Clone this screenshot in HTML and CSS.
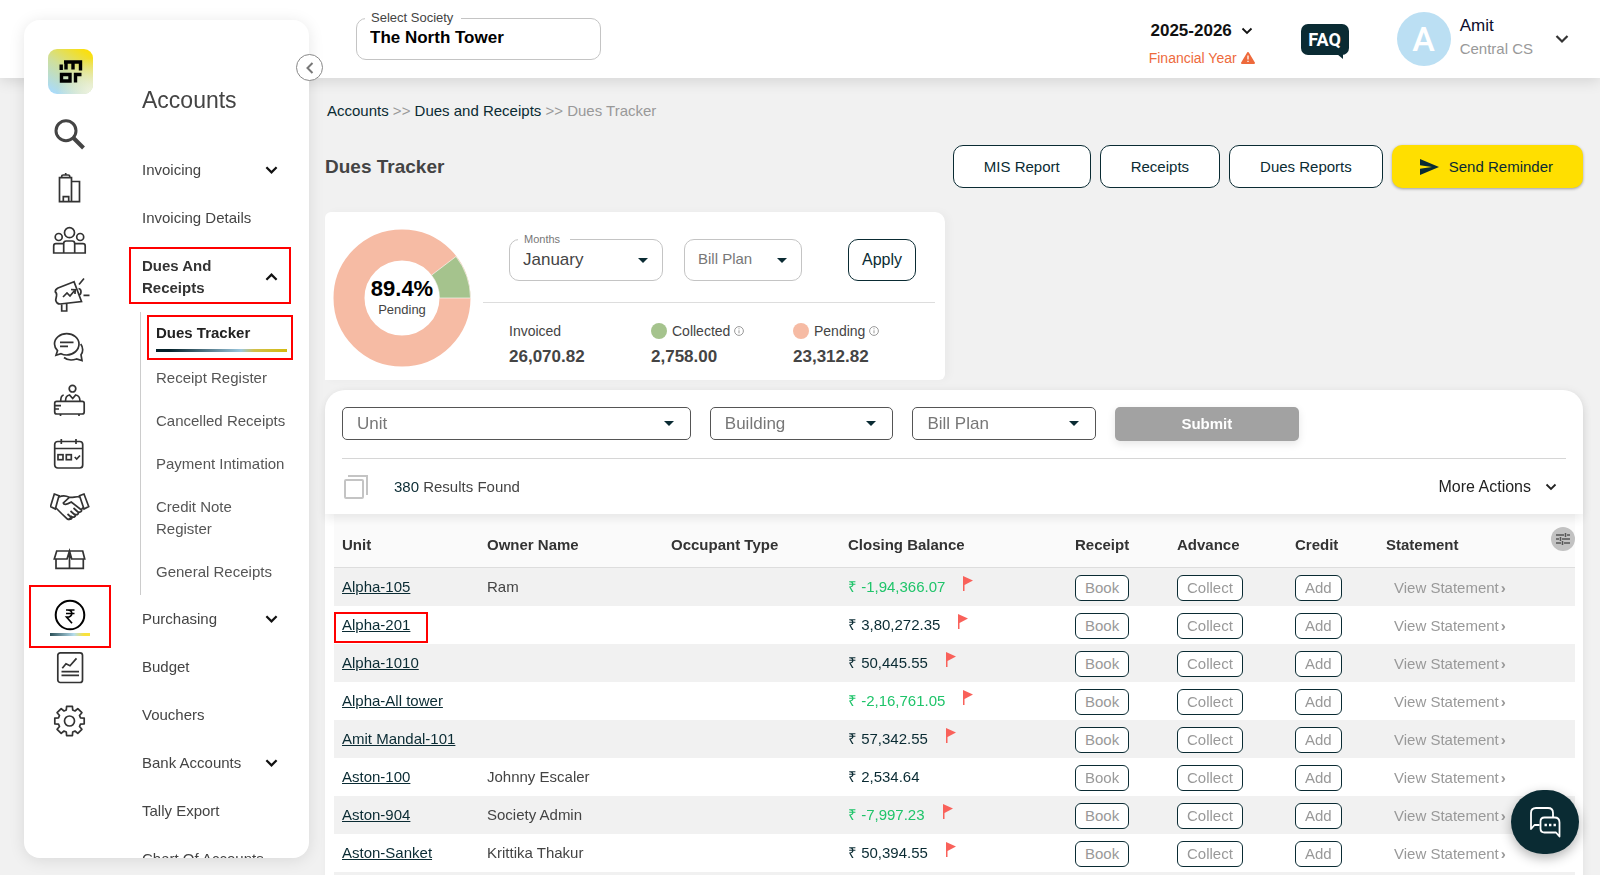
FILE: index.html
```html
<!DOCTYPE html>
<html lang="en">
<head>
	<title>Dues Tracker</title>
	<meta charset="UTF-8">
	<link rel="stylesheet" href="styles.css">
</head>
<body>
	<header class="topbar">
		<fieldset class="field society">
			<legend><label for="society">Select Society</label></legend>
			<select id="society"><option>The North Tower</option></select>
		</fieldset>
		<div class="year">
			<button type="button" class="year-btn">2025-2026
				<svg width="12" height="8" viewBox="0 0 12 8"><path d="M1.500 1.500l4.500 4.500 4.500-4.500" fill="none" stroke="#111" stroke-width="1.800"/></svg>
			</button>
			<span class="year-note">Financial Year
				<svg width="14" height="12" viewBox="0 0 14 12"><path d="M7 1L13 11H1z" fill="#ee6a3c" stroke="#ee6a3c" stroke-width="2" stroke-linejoin="round"/><path d="M7 3.500v4M7 8.700v1.300" stroke="#fff" stroke-width="1.300"/></svg>
			</span>
		</div>
		<a href="#" class="faq">FAQ</a>
		<div class="user">
			<span class="avatar">A</span>
			<span class="who"><span class="name">Amit</span><span class="role">Central CS</span></span>
			<button type="button" class="plain" aria-label="Account menu">
				<svg width="14" height="10" viewBox="0 0 14 10"><path d="M1.500 2l5.500 5.500L12.500 2" fill="none" stroke="#333" stroke-width="2.200"/></svg>
			</button>
		</div>
	</header>

	<aside class="sidebar">
		<div class="side-scroll">
			<div class="rail">
				<svg class="logo" width="45" height="45" viewBox="0 0 45 45">
					<defs>
						<linearGradient id="logo-fill" x1="0.150" y1="1" x2="0.800" y2="0">
							<stop offset="0" stop-color="#a9dbfb"/>
							<stop offset="0.500" stop-color="#cfdf9c"/>
							<stop offset="1" stop-color="#fbdf0c"/>
						</linearGradient>
						<radialGradient id="logo-glow" cx="1" cy="1" r="0.800">
							<stop offset="0" stop-color="#f1f4e4"/>
							<stop offset="1" stop-color="#f1f4e4" stop-opacity="0"/>
						</radialGradient>
					</defs>
					<rect width="45" height="45" rx="9" fill="url(#logo-fill)"/>
					<rect width="45" height="45" rx="9" fill="url(#logo-glow)"/>
					<path d="M13.200 15.500v5.500M16 13h16.500v8.500M25 13v7.500M18 13v7.500M13.500 25.500h8.500v6.500h-8.500zM27.500 33.500v-8h6" fill="none" stroke="#000" stroke-width="3.400"/>
				</svg>
				<ul>
					<li class="search"><a href="#" aria-label="Search"><svg viewBox="0 0 40 40"><circle cx="16" cy="16.700" r="10" stroke-width="3"/><path d="M23.500 24l10 10" stroke-width="4"/></svg></a></li>
					<li><a href="#" aria-label="Buildings"><svg viewBox="0 0 40 40"><path d="M9.500 9.700h12v24h-12zM21.500 13.500h8v20.200h-8M13.300 33.700v-5h5.400v5M11.700 9.500V8q0-1 1.500-1h5q1.500 0 1.500 1v1.500M15.700 7V5"/></svg></a></li>
					<li><a href="#" aria-label="Members"><svg viewBox="0 0 40 40"><circle cx="19.500" cy="11.700" r="5"/><circle cx="8.700" cy="16" r="3.500"/><circle cx="30.200" cy="16" r="3.500"/><path d="M13.700 32V22.500q0-2.500 2.500-2.500h6q2.500 0 2.500 2.500V32zM13.700 32h-10v-7q0-2.300 2.300-2.300h7.700M24.700 32h10.500v-7q0-2.300-2.300-2.300h-8.200"/></svg></a></li>
					<li><a href="#" aria-label="Notices"><svg viewBox="0 0 40 40"><path d="M24 7.700L8 14q-3 1.500-2.700 4 1.700 1 1.200 4L5.700 26q.8 4 4.300 4l21.500-2.500zM11.700 30v7h5v-7.700M28.500 14.500q2.500.5 2.500 3.300t-2 3.300M29 10.500l5-6M33.500 21.300h6M13 23l4-4 3 3 5-6M21 15.500l4.200.3-.2 4.200"/></svg></a></li>
					<li><a href="#" aria-label="Messages"><svg viewBox="0 0 40 40"><path d="M7.500 23.700C5 21 4.500 19 4.500 17 4.500 11 10 6.700 16.700 6.700S29 11 29 17s-5.500 11-12.300 11c-2.200 0-4-.4-5.700-1.300L6 28.300zM10 15.300h13.500M10 19.300h8M30.700 17c2.700 3.500 2.500 8 .3 10.700l1 5.800-5.500-1.500c-4.500 1.500-9.500 1-12.500-1.500"/></svg></a></li>
					<li><a href="#" aria-label="Helpdesk"><svg viewBox="0 0 40 40"><circle cx="22.500" cy="8.700" r="3.300"/><path d="M15.500 21c0-3 1-5.500 4-6l3.200 3.500 3-3.500c3 .5 4.300 3 4.300 6M10.700 21c0-3.500.8-5.500 3-6"/><rect x="4.700" y="21.300" width="29.500" height="12.700" rx="2"/><path d="M5 25.700h6M5 29h4M10.500 34v2M29 34v2"/></svg></a></li>
					<li><a href="#" aria-label="Calendar"><svg viewBox="0 0 40 40"><rect x="4.700" y="8.500" width="28" height="26.500" rx="3"/><path d="M4.700 15.500h28M11.300 6v5M26 6v5M24.700 24l2 2 3.300-3.500"/><rect x="8" y="21.700" width="5" height="5"/><rect x="16.300" y="21.700" width="5" height="5"/></svg></a></li>
					<li><a href="#" aria-label="Vendors"><svg viewBox="0 0 40 40"><path d="M4.300 8L9 9.700 5.300 23 .5 20.500zM34 8l-4.500 1.700L34 23l4.700-2.500zM9 11q5-2.500 10.300.3M29.500 11c-4-1-6 1-10.200.3l-6 5.700c.5 2 3 2 8-1L31.500 24M6 22l5.500 5.500 6 5.700 1.500.3 1.500-1.700M33.500 21l-2 2.500c.5 2-1 3-3 2.500.3 2-1.200 3.200-3 2.500.3 2-1.500 3.300-3.500 2.300.3 2-1.500 3-3.500 2M23.500 22l5 4.500M20.500 25l5 4.500M17.500 28l4 3.500"/></svg></a></li>
					<li><a href="#" aria-label="Inventory"><svg viewBox="0 0 40 40"><path d="M6.700 12h26L34.700 20h-13l-2.200-8-2.500 8H4.300zM6 20v9.300h27.300V20M19.500 12v17.300"/></svg></a></li>
					<li class="on"><a href="#" aria-label="Accounts"><svg viewBox="0 0 40 40"><circle cx="20" cy="20" r="14.300" stroke-width="2"/><path d="M16 15h8.500M16 18.500h8.500M17 15c6.500-.5 6.500 7.500-.3 7.200l5.300 6"/></svg></a></li>
					<li><a href="#" aria-label="Reports"><svg viewBox="0 0 40 40"><rect x="7.800" y="4.800" width="24.700" height="29.700" rx="2.500"/><path d="M12.300 20.300L16 15.700l4 2 6.500-7.300M11.500 23.700H29M11.500 27.300H29"/></svg></a></li>
					<li><a href="#" aria-label="Settings"><svg viewBox="0 0 40 40"><circle cx="19.500" cy="20" r="5"/><path transform="translate(19.500 20)" stroke-linejoin="round" d="M-3.200-11L-2.900-14.700H2.900L3.200-11 5.500-10 8.300-12.400 12.400-8.300 10-5.500 11-3.200 14.700-2.900V2.900L11 3.200 10 5.500 12.400 8.300 8.300 12.400 5.500 10 3.200 11 2.900 14.700H-2.900L-3.200 11-5.500 10-8.300 12.400-12.400 8.300-10 5.500-11 3.200-14.700 2.900V-2.900L-11-3.200-10-5.500-12.400-8.300-8.300-12.400-5.500-10z"/></svg></a></li>
				</ul>
			</div>
			<nav class="menu">
				<h2>Accounts</h2>
				<ul>
					<li><a href="#">Invoicing <svg class="chev" viewBox="0 0 14 10"><path d="M1.500 2L7 7.500 12.500 2"/></svg></a></li>
					<li><a href="#">Invoicing Details</a></li>
					<li class="open"><a href="#"><span>Dues And Receipts</span> <svg class="chev" viewBox="0 0 14 10"><path d="M1.500 8L7 2.500 12.500 8"/></svg></a>
						<ul class="sub">
							<li class="current"><a href="#">Dues Tracker</a></li>
							<li><a href="#">Receipt Register</a></li>
							<li><a href="#">Cancelled Receipts</a></li>
							<li><a href="#">Payment Intimation</a></li>
							<li><a href="#">Credit Note Register</a></li>
							<li><a href="#">General Receipts</a></li>
						</ul>
					</li>
					<li><a href="#">Purchasing <svg class="chev" viewBox="0 0 14 10"><path d="M1.500 2L7 7.500 12.500 2"/></svg></a></li>
					<li><a href="#">Budget</a></li>
					<li><a href="#">Vouchers</a></li>
					<li><a href="#">Bank Accounts <svg class="chev" viewBox="0 0 14 10"><path d="M1.500 2L7 7.500 12.500 2"/></svg></a></li>
					<li><a href="#">Tally Export</a></li>
					<li><a href="#">Chart Of Accounts</a></li>
				</ul>
			</nav>
		</div>
		<button type="button" class="collapse" aria-label="Collapse menu">
			<svg width="8" height="12" viewBox="0 0 8 12"><path d="M6.500 1L1.500 6l5 5" fill="none" stroke="#777" stroke-width="2"/></svg>
		</button>
	</aside>

	<main class="page">
		<p class="crumbs"><a href="#">Accounts</a> &gt;&gt; <a href="#">Dues and Receipts</a> &gt;&gt; Dues Tracker</p>
		<div class="title-row">
			<h1>Dues Tracker</h1>
			<button type="button" class="btn">MIS Report</button>
			<button type="button" class="btn">Receipts</button>
			<button type="button" class="btn">Dues Reports</button>
			<button type="button" class="btn send">
				<svg width="19" height="16" viewBox="0 0 19 16"><path d="M0 0l19 8-19 8V9.800L12 8 0 6.200z" fill="#0a2b33"/></svg>
				Send Reminder
			</button>
		</div>

		<section class="summary">
			<div class="donut">
				<svg width="138" height="138" viewBox="0 0 138 138">
					<circle cx="69" cy="69" r="53" fill="none" stroke="#f6bba4" stroke-width="31"/>
					<path d="M137.500 69A68.500 68.500 0 0 0 123 27.500L98.500 46.200A37.500 37.500 0 0 1 106.500 69z" fill="#a5c38d" stroke="#fff" stroke-width="0.600"/>
				</svg>
				<div class="donut-text"><strong>89.4%</strong><span>Pending</span></div>
			</div>
			<div class="summary-body">
				<div class="summary-form">
					<fieldset class="field month">
						<legend><label for="month">Months</label></legend>
						<select id="month"><option>January</option></select>
					</fieldset>
					<div class="field plan">
						<select aria-label="Bill Plan"><option>Bill Plan</option></select>
					</div>
					<button type="button" class="apply">Apply</button>
				</div>
				<dl class="stats">
					<div><dt>Invoiced</dt><dd>26,070.82</dd></div>
					<div><dt><i class="dot green"></i>Collected <svg class="info" viewBox="0 0 10 10"><circle cx="5" cy="5" r="4.400"/><path d="M5 4.300v3M5 2.300v1"/></svg></dt><dd>2,758.00</dd></div>
					<div><dt><i class="dot peach"></i>Pending <svg class="info" viewBox="0 0 10 10"><circle cx="5" cy="5" r="4.400"/><path d="M5 4.300v3M5 2.300v1"/></svg></dt><dd>23,312.82</dd></div>
				</dl>
			</div>
		</section>

		<section class="panel">
			<div class="panel-top">
				<form class="filters">
					<div class="pick"><select aria-label="Unit"><option>Unit</option></select></div>
					<div class="pick"><select aria-label="Building"><option>Building</option></select></div>
					<div class="pick"><select aria-label="Bill Plan filter"><option>Bill Plan</option></select></div>
					<button type="button" class="submit">Submit</button>
				</form>
				<div class="results">
					<button type="button" class="plain" aria-label="Select all">
						<svg width="24" height="24" viewBox="0 0 24 24" fill="none" stroke="#c4c4c4" stroke-width="2"><rect x="1" y="5" width="18" height="18" rx="1"/><path d="M4 1h19v19"/></svg>
					</button>
					<p><b>380</b> Results Found</p>
					<button type="button" class="plain more">More Actions
						<svg width="12" height="8" viewBox="0 0 12 8"><path d="M1.500 1.500L6 6l4.500-4.500" fill="none" stroke="#222" stroke-width="1.800"/></svg>
					</button>
				</div>
			</div>
			<div class="table-wrap">
				<button type="button" class="columns" aria-label="Choose columns">
					<svg width="14" height="14" viewBox="0 0 14 14" fill="none" stroke="#555" stroke-width="1.500"><path d="M0 3h8M11 3h3M9.500 1v4M0 7h3M6 7h8M4.500 5v4M0 11h5M8 11h6M6.500 9v4"/></svg>
				</button>
				<table>
					<colgroup><col class="c-unit"><col class="c-owner"><col class="c-type"><col class="c-bal"><col class="c-rec"><col class="c-adv"><col class="c-cred"><col></colgroup>
					<thead>
						<tr><th>Unit</th><th>Owner Name</th><th>Occupant Type</th><th>Closing Balance</th><th>Receipt</th><th>Advance</th><th>Credit</th><th>Statement</th></tr>
					</thead>
					<tbody id="rows"></tbody>
				</table>
			</div>
		</section>
	</main>

	<button type="button" class="chat" aria-label="Chat">
		<svg width="32" height="32" viewBox="0 0 32 32" fill="none" stroke="#fff" stroke-width="1.800" stroke-linejoin="round"><path d="M10.500 19H5.500L2 23V7q0-5 5-5h12q5 0 5 5v4.500"/><path d="M15.500 11.500h10q5 0 5 5v14l-3.500-4H15.500q-4 0-4-4v-7q0-4 4-4z"/><path d="M15.500 19h2.400M20 19h2.400M24.500 19h2.400" stroke-width="2.400"/></svg>
	</button>

	<script>
		var rows = [
			["Alpha-105", "Ram", "-1,94,366.07", true],
			["Alpha-201", "", "3,80,272.35", true],
			["Alpha-1010", "", "50,445.55", true],
			["Alpha-All tower", "", "-2,16,761.05", true],
			["Amit Mandal-101", "", "57,342.55", true],
			["Aston-100", "Johnny Escaler", "2,534.64", false],
			["Aston-904", "Society Admin", "-7,997.23", true],
			["Aston-Sanket", "Krittika Thakur", "50,394.55", true]
		];
		var flag = '<svg class="flag" viewBox="0 0 10 15"><path d="M0 0l10 4.500L1.500 9v6H0z" fill="#f9615a"/></svg>';
		var html = "";
		for (var i = 0; i < rows.length; i++) {
			var r = rows[i];
			html += '<tr><td' + (r[0] == "Alpha-201" ? ' class="picked"' : '') + '><a href="#">' + r[0] + '</a></td>'
				+ '<td>' + r[1] + '</td><td></td>'
				+ '<td class="' + (r[2].charAt(0) == "-" ? 'bal credit' : 'bal') + '">₹ ' + r[2] + (r[3] ? flag : '') + '</td>'
				+ '<td><button type="button">Book</button></td>'
				+ '<td><button type="button">Collect</button></td>'
				+ '<td><button type="button">Add</button></td>'
				+ '<td class="view"><a href="#">View Statement<b>›</b></a></td></tr>';
		}
		html += '<tr><td colspan="8"></td></tr>';
		document.getElementById("rows").innerHTML = html;
	</script>
</body>
</html>
```
FILE: styles.css
```css
*{
	margin: 0;
	padding: 0;
	box-sizing: border-box;
}
body{
	height: 100vh;
	overflow: hidden;
	background: #f1f1f1;
	color: #444;
	font: 15px/22px "Liberation Sans", Arial, sans-serif;
}
ul{
	list-style: none;
}
a{
	color: inherit;
	text-decoration: none;
}
button,select{
	font: inherit;
	color: inherit;
	cursor: pointer;
}
svg{
	flex: none;
}
select{
	appearance: none;
	border: 0;
	background: none;
	width: 100%;
	outline: none;
}
.plain{
	display: flex;
	align-items: center;
	border: 0;
	background: none;
}

/* top bar */
.topbar{
	height: 78px;
	padding: 0 31px 0 356px;
	background: #fff;
	box-shadow: 0 3px 14px rgba(0,0,0,.12);
	display: flex;
	align-items: center;
}
.field{
	border: 1px solid #c4c4c4;
	border-radius: 10px;
	position: relative;
	padding: 0 13px;
}
.field legend{
	margin-left: -5px;
	padding: 0 6px;
	line-height: 14px;
}
.society{
	width: 245px;
	height: 49px;
	margin: 0 auto 7px 0;
}
.society legend{
	font-size: 13px;
	padding-right: 8px;
}
.society select{
	display: block;
	height: 26px;
	font-size: 17px;
	font-weight: bold;
	color: #000;
}
.year{
	display: flex;
	flex-direction: column;
	align-items: center;
	gap: 5px;
	padding-top: 10px;
	margin-right: 46px;
}
.year-btn{
	display: flex;
	align-items: center;
	gap: 9px;
	border: 0;
	background: none;
	font-size: 17px;
	font-weight: bold;
	color: #111;
}
.year-note{
	display: flex;
	align-items: center;
	gap: 4px;
	font-size: 14px;
	color: #ee6a3c;
}
.faq{
	position: relative;
	width: 48px;
	height: 31px;
	border-radius: 7px;
	background: #0a2b33;
	color: #fff;
	font: bold 18px/31px Roboto, "Liberation Sans", sans-serif;
	text-align: center;
	margin-right: 48px;
}
.faq::after{
	content: "";
	position: absolute;
	right: 6px;
	bottom: -4px;
	border-top: 5px solid #0a2b33;
	border-left: 6px solid transparent;
}
.user{
	display: flex;
	align-items: center;
}
.avatar{
	width: 54px;
	height: 54px;
	border-radius: 50%;
	background: #bbdff3;
	color: #fff;
	font: 500 34px/54px Roboto, "Liberation Sans", sans-serif;
	text-align: center;
	margin-right: 9px;
}
.who{
	display: flex;
	flex-direction: column;
	margin: 0 22px 4px 0;
}
.name{
	font-size: 17px;
	line-height: 24px;
	color: #0c0c2c;
}
.role{
	color: #999;
}

/* sidebar */
.sidebar{
	position: fixed;
	top: 20px;
	bottom: 17px;
	left: 24px;
	width: 285px;
	border-radius: 16px;
	background: #fff;
	box-shadow: 0 2px 16px rgba(0,0,0,.1);
}
.side-scroll{
	height: 100%;
	border-radius: 16px;
	overflow: hidden;
	display: flex;
}
.rail{
	width: 92px;
	padding-top: 29px;
	flex: none;
	display: flex;
	flex-direction: column;
	align-items: center;
}
.rail ul{
	margin-top: 13px;
}
.rail li{
	position: relative;
	width: 40px;
	height: 53px;
	display: flex;
	align-items: center;
}
.rail li svg{
	display: block;
	width: 40px;
	height: 40px;
	fill: none;
	stroke: #333;
	stroke-width: 1.7;
}
.rail li.search{
	height: 54px;
}
.rail li.search svg{
	stroke: #444;
}
.rail li.on{
	height: 56px;
	padding-top: 3px;
}
.rail li.on svg{
	stroke: #000;
}
.rail li.on a::after{
	content: "";
	position: absolute;
	left: 0;
	right: 0;
	bottom: 5px;
	height: 3px;
	background: linear-gradient(90deg, #2c5058, #b5dcec 60%, #f9e23c 85%);
}
/* red marker frames */
.rail li.on::after,.open > a::after,.current::after,.picked::after{
	content: "";
	position: absolute;
	border: 2px solid #f00;
	pointer-events: none;
}
.rail li.on::after{
	inset: 0 -21px -7px;
}
.menu{
	flex: 1;
	padding: 66px 0 0 26px;
}
.menu h2{
	font-size: 23px;
	line-height: 28px;
	font-weight: normal;
	margin-bottom: 32px;
}
.menu a{
	position: relative;
	display: flex;
	align-items: center;
	justify-content: space-between;
	padding: 13px 31px 13px 0;
}
.open > a{
	font-weight: bold;
	color: #333;
}
.open > a span{
	width: 90px;
}
.open > a::after{
	inset: 5px 18px 8px -13px;
}
.chev{
	width: 13px;
	height: 10px;
	fill: none;
	stroke: #111;
	stroke-width: 2.4;
}
.sub{
	margin-left: -2px;
	padding-bottom: 2px;
	border-left: 1px solid #ccc;
}
.sub li{
	position: relative;
	padding: 11px 22px 10px 15px;
}
.sub a{
	padding: 0;
	color: #555;
}
.sub .current{
	padding: 10px 22px 12px 15px;
}
.sub .current a{
	font-weight: bold;
	color: #222;
}
.current a::after{
	content: "";
	position: absolute;
	left: 0;
	right: 0;
	bottom: -8px;
	height: 3px;
	background: linear-gradient(90deg, #04212a 10%, #9cc8de 65%, #d2c04a 75%, #d3bb10);
}
.current::after{
	inset: 3px 16px -4px 6px;
}
.sub li:nth-child(5) a{
	padding-right: 20px;
}
.collapse{
	position: absolute;
	top: 34px;
	right: -14px;
	width: 27px;
	height: 27px;
	border: 1px solid #888;
	border-radius: 50%;
	background: #fff;
	display: flex;
	align-items: center;
	justify-content: center;
}

/* page */
.page{
	padding: 22px 17px 0 325px;
}
.crumbs{
	padding-left: 2px;
	color: #999;
}
.crumbs a{
	color: #0a2b33;
}
.title-row{
	display: flex;
	align-items: center;
	gap: 9px;
	margin-top: 23px;
}
.title-row h1{
	font-size: 19px;
	margin-right: auto;
}
.btn{
	height: 43px;
	padding: 0 30px;
	border: 1px solid #0a2b33;
	border-radius: 10px;
	background: #fff;
	color: #0a2b33;
}
.send{
	display: flex;
	align-items: center;
	gap: 10px;
	padding: 0 30px 0 28px;
	border: 0;
	background: #ffdf00;
	box-shadow: 0 1px 3px rgba(0,0,0,.35);
}
.summary{
	width: 620px;
	height: 168px;
	margin-top: 24px;
	padding: 0 10px 0 8px;
	border-radius: 6px 10px 6px 0;
	background: #fff;
	box-shadow: 4px 0 8px rgba(0,0,0,.03);
	display: flex;
}
.donut{
	position: relative;
	width: 138px;
	padding-top: 17px;
	flex: none;
}
.donut-text{
	position: absolute;
	inset: 65px 0 auto;
	display: flex;
	flex-direction: column;
	align-items: center;
	font-size: 13px;
	line-height: 18px;
}
.donut-text strong{
	font-size: 22px;
	line-height: 24px;
	color: #000;
}
.summary-body{
	flex: 1;
	margin-left: 12px;
}
.summary-form{
	display: flex;
	align-items: flex-end;
	padding: 0 19px 21px 26px;
	height: 91px;
	border-bottom: 1px solid #ddd;
}
.month{
	width: 154px;
	height: 48px;
}
.month legend{
	font-size: 11px;
	line-height: 12px;
	padding-right: 10px;
	color: #777;
}
.month select{
	display: block;
	height: 30px;
	font-size: 17px;
}
.plan{
	width: 118px;
	height: 42px;
	margin: 0 auto 0 21px;
	color: #777;
}
.plan select{
	height: 38px;
}
.field.month::after,.plan::after,.pick::after{
	content: "";
	position: absolute;
	right: 14px;
	bottom: 17px;
	border: 5px solid transparent;
	border-top-color: #0a2b33;
	border-bottom: 0;
	pointer-events: none;
}
.apply{
	width: 68px;
	height: 42px;
	border: 1px solid #0a2b33;
	border-radius: 10px;
	background: #fff;
	font-size: 16px;
	color: #0a2b33;
}
.stats{
	display: grid;
	grid-template-columns: 142px 142px 1fr;
	padding: 17px 0 0 26px;
}
.stats dt{
	display: flex;
	align-items: center;
	font-size: 14px;
}
.stats dd{
	margin-top: 4px;
	font-size: 17px;
	font-weight: bold;
}
.dot{
	width: 16px;
	height: 16px;
	border-radius: 50%;
	margin-right: 5px;
}
.green{
	background: #a5c38d;
}
.peach{
	background: #f6bba4;
}
.info{
	width: 10px;
	height: 10px;
	margin-left: 4px;
	fill: none;
	stroke: #999;
}

/* results */
.panel{
	margin-top: 10px;
	border-radius: 20px 20px 0 0;
	background: #fff;
	box-shadow: 2px 0 8px rgba(0,0,0,.05);
}
.panel-top{
	position: relative;
	height: 124px;
	padding: 17px 17px 0;
	border-radius: 20px 20px 0 0;
	box-shadow: 0 5px 10px rgba(0,0,0,.08);
}
.filters{
	display: grid;
	grid-template-columns: 57% 30% 30% 30%;
	grid-template-columns: 28.5% 15% 15% 15%;
	gap: 19px;
	padding-bottom: 17px;
	border-bottom: 1px solid #d6d6d6;
}
.pick{
	position: relative;
	height: 33px;
	padding: 0 14px;
	border: 1px solid #555;
	border-radius: 5px;
	color: #777;
	font-size: 17px;
}
.pick select{
	height: 32px;
}
.pick::after{
	right: 16px;
	bottom: 13px;
}
.submit{
	height: 34px;
	border: 0;
	border-radius: 5px;
	background: #a2a2a2;
	color: #fff;
	font-weight: bold;
	box-shadow: 0 3px 8px rgba(0,0,0,.1);
}
.results{
	display: flex;
	align-items: center;
	height: 56px;
	padding: 0 9px 0 2px;
}
.results p{
	margin: 0 auto 0 26px;
}
.results b{
	font-weight: normal;
	color: #0a2b33;
}
.more{
	gap: 14px;
	font-size: 16px;
	color: #222;
}
.table-wrap{
	position: relative;
	padding: 0 8px 0 9px;
}
.columns{
	position: absolute;
	top: 13px;
	right: 8px;
	width: 24px;
	height: 24px;
	border: 0;
	border-radius: 50%;
	background: #c2c2c2;
	display: flex;
	align-items: center;
	justify-content: center;
}
table{
	width: 100%;
	table-layout: fixed;
	border-collapse: separate;
	border-spacing: 0;
}
.c-unit{ width: 145px; }
.c-owner{ width: 184px; }
.c-type{ width: 177px; }
.c-bal{ width: 227px; }
.c-rec{ width: 102px; }
.c-adv{ width: 118px; }
.c-cred{ width: 91px; }
th{
	height: 54px;
	padding: 8px 8px 0;
	border-bottom: 1px solid #ddd;
	background: rgba(0,0,0,.02);
	text-align: left;
	color: #333;
}
td{
	position: relative;
	height: 38px;
	padding: 0 8px;
	white-space: nowrap;
}
tbody tr:nth-child(odd){
	background: #f1f1f1;
}
td:first-child a{
	color: #0a2b33;
	text-decoration: underline;
}
.picked::after{
	inset: 6px 51px 1px 0;
}
.bal{
	color: #0a2b33;
}
.credit{
	color: #1fc46a;
}
.flag{
	width: 10px;
	height: 15px;
	margin-left: 18px;
	vertical-align: 1px;
}
td button{
	display: block;
	height: 26px;
	margin-top: 2px;
	padding: 0 9px;
	border: 1px solid #0a2b33;
	border-radius: 6px;
	background: #fff;
	color: #999;
}
.view{
	padding: 2px 0 0 16px;
	color: #999;
}
.view b{
	margin-left: 2px;
}
.chat{
	position: fixed;
	right: 21px;
	bottom: 21px;
	width: 68px;
	height: 64px;
	border: 0;
	border-radius: 32px;
	background: #0a2b33;
	box-shadow: 0 4px 12px rgba(0,0,0,.3);
	display: flex;
	align-items: center;
	justify-content: center;
}
```
